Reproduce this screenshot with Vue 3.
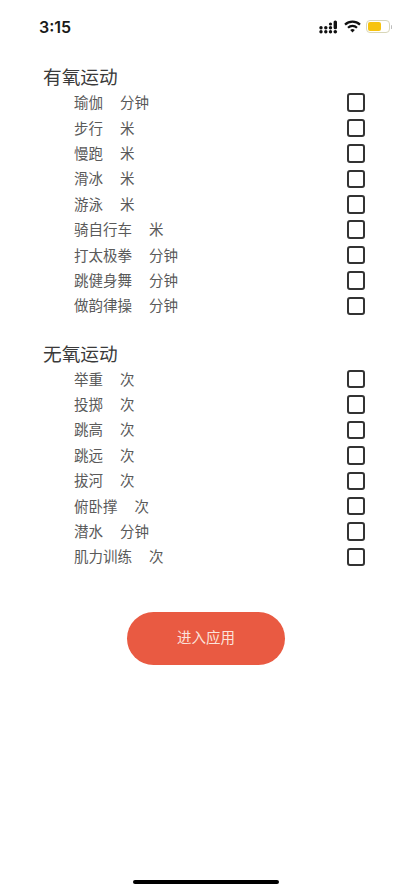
<script setup>
const sections = [
  { title: '有氧运动', items: [['瑜伽','分钟'],['步行','米'],['慢跑','米'],['滑冰','米'],['游泳','米'],['骑自行车','米'],['打太极拳','分钟'],['跳健身舞','分钟'],['做韵律操','分钟']] },
  { title: '无氧运动', items: [['举重','次'],['投掷','次'],['跳高','次'],['跳远','次'],['拔河','次'],['俯卧撑','次'],['潜水','分钟'],['肌力训练','次']] },
]
</script>

<template>
  <div class="page">
    <header class="status">
      <span class="time">3:15</span>
      <div class="status-icons">
        <svg class="signal" width="19" height="14" viewBox="0 0 19 14" fill="#111">
          <circle cx="2" cy="11.8" r="1.7"/><circle cx="2" cy="7.8" r="1.7"/>
          <circle cx="6.8" cy="11.8" r="1.7"/><circle cx="6.8" cy="7.8" r="1.7"/>
          <circle cx="11.5" cy="11.8" r="1.7"/><circle cx="11.5" cy="7.8" r="1.7"/><circle cx="11.5" cy="4" r="1.6"/>
          <rect x="14.6" y="0.5" width="3.4" height="8.8" rx="1.6"/><circle cx="16.3" cy="11.8" r="1.8"/>
        </svg>
        <svg class="wifi" width="17" height="13" viewBox="0 0 17 13" fill="none" stroke="#111" stroke-width="2.2">
          <path d="M1 4.6a11 11 0 0 1 15 0"/>
          <path d="M4 7.7a6.5 6.5 0 0 1 9 0"/>
          <path d="M8.5 12.6 6.2 10a3.3 3.3 0 0 1 4.6 0Z" fill="#111" stroke="none"/>
        </svg>
        <div class="battery"><div class="battery-fill"></div></div>
        <div class="battery-cap"></div>
      </div>
    </header>

    <main class="content">
      <section v-for="s in sections" :key="s.title" class="section">
        <h2 class="title">{{ s.title }}</h2>
        <div v-for="it in s.items" :key="it[0]" class="row">
          <span class="name">{{ it[0] }}</span>
          <span class="unit">{{ it[1] }}</span>
          <span class="box"></span>
        </div>
      </section>
      <button class="enter">进入应用</button>
    </main>

    <div class="home"></div>
  </div>
</template>

<style>
html, body { margin: 0; background: #fff; }
</style>

<style scoped>
.page {
  position: relative;
  width: 411px;
  height: 893px;
  overflow: hidden;
  background: #fff;
  font-family: "Noto Sans CJK SC", "Noto Sans", sans-serif;
}
.status {
  height: 54px;
  box-sizing: border-box;
  padding: 0 19px 0 39px;
  display: flex;
  align-items: center;
  justify-content: space-between;
}
.time {
  font-family: Inter, "Liberation Sans", sans-serif;
  font-size: 16px;
  font-weight: 600;
  color: #1a1a1a;
}
.status-icons { display: flex; align-items: center; margin-top: -1px; }
.signal { margin-right: 6px; margin-left: -1px; }
.wifi { margin-right: 5px; }
.battery {
  width: 24px;
  height: 13px;
  box-sizing: border-box;
  border: 1px solid #d8d6b8;
  border-radius: 4px;
  padding: 1px;
}
.battery-fill { width: 13px; height: 9px; background: #f7c30f; border-radius: 2px; }
.battery-cap { width: 1.5px; height: 4px; margin-left: 1px; background: #bdbdbd; border-radius: 1px; }
.content { padding: 10px 46px 0 43px; display: flex; flex-direction: column; }
.section { margin-bottom: 22px; }
.section:last-of-type { margin-bottom: 0; }
.title {
  margin: 0;
  height: 26px;
  line-height: 23px;
  font-size: 18.7px;
  font-weight: 400;
  color: #3a3a3a;
}
.row {
  height: 25.4px;
  display: flex;
  align-items: center;
  padding-left: 31px;
  font-size: 14.5px;
  color: #5a5a5a;
}
.name, .unit { padding-bottom: 2px; }
.unit { margin-left: 17px; }
.box {
  margin-left: auto;
  width: 18.5px;
  height: 18.5px;
  box-sizing: border-box;
  border: 2px solid #333;
  border-radius: 3px;
}
.enter {
  align-self: center;
  margin: 42.6px 0 0 4px;
  width: 158px;
  height: 53px;
  padding: 0 0 4px;
  border: none;
  border-radius: 27px;
  background: #e95a42;
  color: #fbe3dc;
  font-family: inherit;
  font-size: 14.5px;
}
.home {
  position: absolute;
  left: 133px;
  bottom: 9px;
  width: 146px;
  height: 4.5px;
  border-radius: 3px;
  background: #000;
}
</style>
